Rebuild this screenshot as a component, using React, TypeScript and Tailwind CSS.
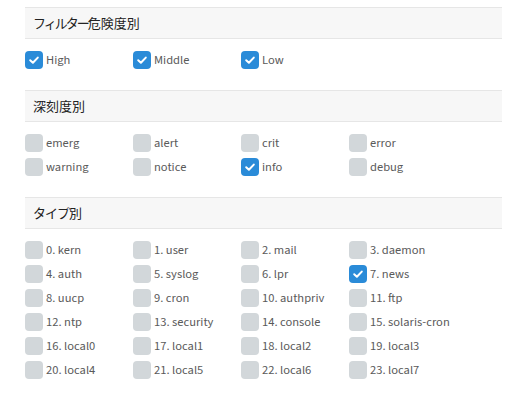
import React from "react";

const Check = ({ on, label }: { on: boolean; label: string }) => (
  <div className="flex items-center h-[24px]">
    <div
      className={
        on
          ? "w-[18px] h-[18px] rounded-[4px] flex items-center justify-center shrink-0 bg-[#2a8bd8]"
          : "w-[18px] h-[18px] rounded-[4px] flex items-center justify-center shrink-0 bg-[#d2d7da]"
      }
    >
      {on && (
        <svg width="12" height="12" viewBox="0 0 12 12">
          <path d="M2.2 6.2 L4.9 8.8 L9.8 3.6" fill="none" stroke="white" strokeWidth="2" strokeLinecap="round" strokeLinejoin="round" />
        </svg>
      )}
    </div>
    <span className="ml-[3px] whitespace-nowrap text-[12.5px] text-[#5a5a5a] leading-none font-['Source_Sans_3',sans-serif]">
      {label}
    </span>
  </div>
);

const Header = ({ children }: { children: React.ReactNode }) => (
  <div className="h-[32px] bg-[#f7f7f7] border-y border-[#e6e6e6] flex items-center pl-[8px] text-[13px] text-[#222] font-['Noto_Sans_CJK_JP',sans-serif]">
    {children}
  </div>
);

const Grid = ({ items }: { items: [string, boolean][] }) => (
  <div className="grid grid-cols-[108px_108px_108px_108px] pt-[9px] pb-[18px]">
    {items.map(([l, o]) => (
      <Check key={l} label={l} on={o} />
    ))}
  </div>
);

export default function App() {
  const types = [
    "0. kern", "1. user", "2. mail", "3. daemon",
    "4. auth", "5. syslog", "6. lpr", "7. news",
    "8. uucp", "9. cron", "10. authpriv", "11. ftp",
    "12. ntp", "13. security", "14. console", "15. solaris-cron",
    "16. local0", "17. local1", "18. local2", "19. local3",
    "20. local4", "21. local5", "22. local6", "23. local7",
  ];
  return (
    <div className="w-[515px] h-[396px] bg-white pt-[7px]">
      <div className="ml-[25px] w-[477px]">
        <Header>
          <span className="tracking-[-2px]">フィルター</span>
          <span>危険度別</span>
        </Header>
        <Grid items={[["High", true], ["Middle", true], ["Low", true]]} />
        <Header>深刻度別</Header>
        <Grid
          items={[
            ["emerg", false], ["alert", false], ["crit", false], ["error", false],
            ["warning", false], ["notice", false], ["info", true], ["debug", false],
          ]}
        />
        <Header>
          <span className="tracking-[-1px]">タイプ</span>
          <span>別</span>
        </Header>
        <Grid items={types.map((t) => [t, t === "7. news"] as [string, boolean])} />
      </div>
    </div>
  );
}
